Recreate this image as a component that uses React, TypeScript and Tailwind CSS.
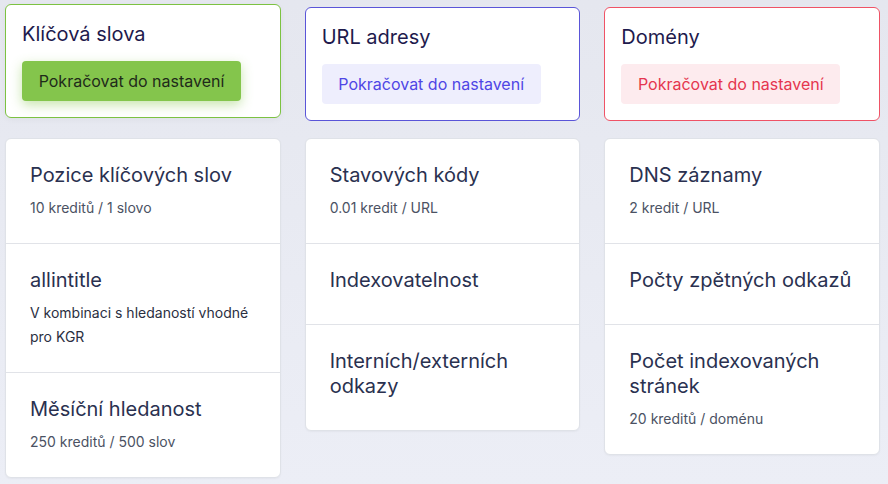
const columns = [
  {
    title: "Klíčová slova",
    card: "border-[#7cc242] -translate-y-[3px] shadow-[0_2px_6px_rgba(0,0,0,0.04)]",
    button: "bg-[#84c54c] text-[#1f2a1a] shadow-[0_4px_12px_rgba(132,197,76,0.45)]",
    items: [
      { name: "Pozice klíčových slov", sub: "10 kreditů / 1 slovo" },
      { name: "allintitle", sub: "V kombinaci s hledaností vhodné pro KGR", dark: true },
      { name: "Měsíční hledanost", sub: "250 kreditů / 500 slov" },
    ],
  },
  {
    title: "URL adresy",
    card: "border-[#5a55d8]",
    button: "bg-[#eeeefd] text-[#4f46e5]",
    items: [
      { name: "Stavových kódy", sub: "0.01 kredit / URL" },
      { name: "Indexovatelnost" },
      { name: "Interních/externích odkazy" },
    ],
  },
  {
    title: "Domény",
    card: "border-[#ef5366]",
    button: "bg-[#fdebee] text-[#e5364f]",
    items: [
      { name: "DNS záznamy", sub: "2 kredit / URL" },
      { name: "Počty zpětných odkazů" },
      { name: "Počet indexovaných stránek", sub: "20 kreditů / doménu" },
    ],
  },
]

export default function App() {
  return (
    <div
      className="min-h-[484px] w-[888px] bg-gradient-to-b from-[#e5e7ef] to-[#eceef6] pl-[5px] pr-[8px] pt-[7px]"
      style={{ fontFamily: "Inter, 'Noto Sans', sans-serif" }}
    >
      <div className="grid grid-cols-3 items-start gap-6">
        {columns.map((col) => (
          <div key={col.title} className="flex flex-col gap-[17px]">
            <div className={`rounded-md border bg-white px-4 pt-[15px] pb-4 ${col.card}`}>
              <h2 className="mb-[13px] text-[20px] leading-7 text-[#1e1a4d]">{col.title}</h2>
              <button className={`h-10 w-[219px] rounded-[4px] px-4 text-[16px] ${col.button}`}>
                Pokračovat do nastavení
              </button>
            </div>
            <div className="rounded-md border border-[#dfe2e8] bg-white shadow-[0_1px_2px_rgba(0,0,0,0.04)]">
              {col.items.map((item, i) => (
                <div
                  key={item.name}
                  className={`px-6 pt-6 pb-[23px] ${i > 0 ? "border-t border-[#e1e3e8]" : ""}`}
                >
                  <h3 className="mb-2 text-[20px] leading-[25px] text-[#2a3150]">{item.name}</h3>
                  {item.sub && (
                    <p
                      className={`text-[14px] leading-6 ${
                        item.dark ? "text-[#2b2f3f]" : "text-[#4b5263]"
                      }`}
                    >
                      {item.sub}
                    </p>
                  )}
                </div>
              ))}
            </div>
          </div>
        ))}
      </div>
    </div>
  )
}
